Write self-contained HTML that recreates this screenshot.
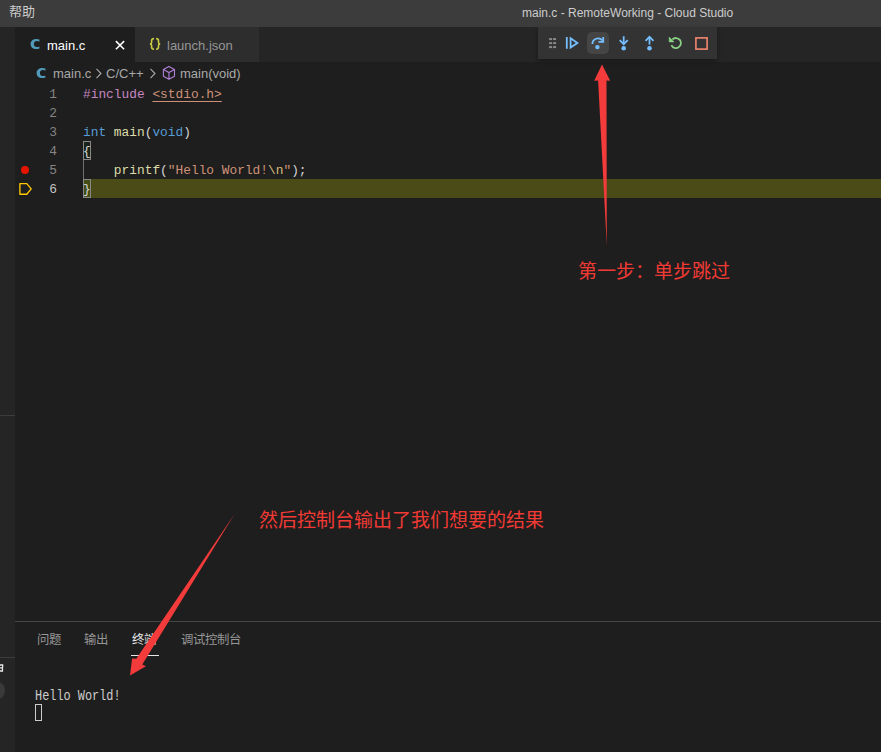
<!DOCTYPE html>
<html lang="zh-CN">
<head>
<meta charset="utf-8">
<style>
*{margin:0;padding:0;box-sizing:border-box}
html,body{width:881px;height:752px;overflow:hidden;background:#1e1e1e;font-family:"Liberation Sans",sans-serif;font-size:13px;color:#ccc;position:relative}
.abs{position:absolute}
#title{left:0;top:0;width:881px;height:27px;background:#3c3c3c}
#menu{left:9px;top:2px;font-size:13px;color:#cccccc;line-height:20px}
#wtitle{left:522px;top:3px;font-size:12px;color:#cccccc;white-space:nowrap;line-height:20px}
#side{left:0;top:27px;width:15px;height:725px;background:#252526}
#tabs{left:15px;top:27px;width:866px;height:35px;background:#252526}
.tab{top:0;height:35px;white-space:nowrap}
#tab1{left:0;width:120px;background:#1e1e1e}
#tab2{left:120px;width:124px;background:#2d2d2d}
#crumbs{left:15px;top:62px;width:866px;height:22px}
.code{font-family:"Liberation Mono",monospace;font-size:12.85px;white-space:pre}
.ln{margin-top:1px;left:15px;width:42px;text-align:right;color:#858585;height:19px;line-height:19px}
.cl{margin-top:1px;left:83px;height:19px;line-height:19px;color:#d4d4d4}
#hl{left:83px;top:179px;width:798px;height:19px;background:#4b4b18}
#panel{left:15px;top:621px;width:866px;height:131px;border-top:1px solid #454545;background:#1e1e1e}
.ptab{top:10px;font-size:12.4px;font-weight:500;color:#969696;white-space:nowrap;line-height:16px}
.red{color:#f23a35;font-size:19px;font-weight:500;white-space:nowrap;line-height:24px}
#dbg{left:538px;top:27px;width:179px;height:32px;background:#333333;box-shadow:0 2px 4px rgba(0,0,0,.35)}
</style>
</head>
<body>
<div id="title" class="abs"></div>
<div id="menu" class="abs">帮助</div>
<div id="wtitle" class="abs">main.c - RemoteWorking - Cloud Studio</div>
<div id="side" class="abs">
  <div class="abs" style="left:0;top:388px;width:15px;height:1px;background:#3c3c3c"></div>
  <div class="abs" style="left:0;top:630px;width:15px;height:1px;background:#3c3c3c"></div>
  <div class="abs" style="left:-11.5px;top:655px;width:16.6px;height:16.6px;border-radius:50%;background:#3a3a3a"></div>
  <svg class="abs" style="left:0;top:637px" width="5" height="9" viewBox="0 0 5 9"><path d="M0 0.2H3.3V1.8H0Z M2 1.8H3.3V3.2H2Z M0 3.2H3.1V4.6H0Z M1.8 4.6H3.1V6.2H1.8Z M0 6.2H3.1V7.7H0Z" fill="#e8e8e8"/></svg>
</div>
<div id="tabs" class="abs">
  <div id="tab1" class="abs tab">
    <svg class="abs" style="left:0;top:0" width="40" height="35" viewBox="0 0 40 35"><path d="M24.4 12.6C23.5 12.1 22.4 11.9 21.2 11.9C17.9 11.9 15.6 14.1 15.6 17.1C15.6 20.2 17.8 22.1 21 22.1C22.3 22.1 23.5 21.9 24.4 21.4V19.4C23.7 19.8 22.8 20 21.9 20C20 20 18.9 18.7 18.9 17C18.9 15.3 20.1 14 21.9 14C22.8 14 23.7 14.3 24.4 14.7Z" fill="#519aba"/></svg>
    <span class="abs" style="left:32px;top:11px;color:#ffffff">main.c</span>
    <svg class="abs" style="left:100px;top:13px" width="11" height="11" viewBox="0 0 11 11"><path d="M0.9 1.1L9.1 9.3M9.1 1.1L0.9 9.3" stroke="#fff" stroke-width="1.55"/></svg>
  </div>
  <div id="tab2" class="abs tab">
    <svg class="abs" style="left:0;top:0" width="30" height="35" viewBox="0 0 30 35"><path d="M19 11.6C17.1 11.6 16.6 12.3 16.6 13.8V15.6C16.6 16.5 16.1 16.9 14.9 16.9C16.1 16.9 16.6 17.3 16.6 18.2V20C16.6 21.5 17.1 22.2 19 22.2M21.1 11.6C23 11.6 23.5 12.3 23.5 13.8V15.6C23.5 16.5 24 16.9 25.2 16.9C24 16.9 23.5 17.3 23.5 18.2V20C23.5 21.5 23 22.2 21.1 22.2" stroke="#cbcb41" stroke-width="1.6" fill="none"/></svg>
    <span class="abs" style="left:32px;top:11px;color:#969696">launch.json</span>
  </div>
</div>
<div id="crumbs" class="abs">
  <svg class="abs" style="left:0;top:0" width="40" height="22" viewBox="0 0 40 22"><path transform="translate(6,-6)" d="M24.4 12.6C23.5 12.1 22.4 11.9 21.2 11.9C17.9 11.9 15.6 14.1 15.6 17.1C15.6 20.2 17.8 22.1 21 22.1C22.3 22.1 23.5 21.9 24.4 21.4V19.4C23.7 19.8 22.8 20 21.9 20C20 20 18.9 18.7 18.9 17C18.9 15.3 20.1 14 21.9 14C22.8 14 23.7 14.3 24.4 14.7Z" fill="#519aba"/></svg>
  <span class="abs" style="left:38px;top:4px;color:#a9a9a9">main.c</span>
  <svg class="abs" style="left:80px;top:6px" width="8" height="11" viewBox="0 0 8 11"><path d="M1.5 0.8L6 5.5L1.5 10.2" stroke="#a9a9a9" stroke-width="1.1" fill="none"/></svg>
  <span class="abs" style="left:91px;top:4px;color:#a9a9a9">C/C++</span>
  <svg class="abs" style="left:134px;top:6px" width="8" height="11" viewBox="0 0 8 11"><path d="M1.5 0.8L6 5.5L1.5 10.2" stroke="#a9a9a9" stroke-width="1.1" fill="none"/></svg>
  <svg class="abs" style="left:147px;top:3px" width="14" height="15" viewBox="0 0 14 15"><path d="M6.95 1.4L12.5 4.4V11.3L6.95 14.3L1.4 11.3V4.4Z M1.4 4.4L6.95 7.6L12.5 4.4 M6.95 7.6V14.3" stroke="#b180d7" stroke-width="1.1" fill="none" stroke-linejoin="round"/></svg>
  <span class="abs" style="left:165px;top:4px;color:#a9a9a9">main(void)</span>
</div>
<div id="hl" class="abs"></div>
<!-- gutter -->
<div class="abs" style="left:20.5px;top:166px;width:8.4px;height:8.4px;border-radius:50%;background:#e51400"></div>
<svg class="abs" style="left:18px;top:182px" width="15" height="15" viewBox="0 0 15 15"><path d="M1.9 1.6H8.8L13.2 6.9L8.8 12.2H1.9Z" stroke="#ffc800" stroke-width="1.35" fill="none" stroke-linejoin="round"/></svg>
<div class="abs code ln" style="top:84px">1</div>
<div class="abs code ln" style="top:103px">2</div>
<div class="abs code ln" style="top:122px">3</div>
<div class="abs code ln" style="top:141px">4</div>
<div class="abs code ln" style="top:160px">5</div>
<div class="abs code ln" style="top:179px;color:#c6c6c6">6</div>
<!-- bracket boxes / indent guide -->
<div class="abs" style="left:83px;top:141px;width:8px;height:19px;border:1px solid #888;background:rgba(0,100,0,0.1)"></div>
<div class="abs" style="left:83px;top:179px;width:8px;height:19px;border:1px solid #888;background:rgba(0,100,0,0.1)"></div>
<div class="abs" style="left:83px;top:160px;width:1px;height:19px;background:#707070"></div>
<div class="abs code cl" style="top:84px"><span style="color:#c586c0">#include</span> <span style="color:#ce9178;text-decoration:underline;text-underline-offset:3px">&lt;stdio.h&gt;</span></div>
<div class="abs code cl" style="top:122px"><span style="color:#569cd6">int</span> <span style="color:#dcdcaa">main</span>(<span style="color:#569cd6">void</span>)</div>
<div class="abs code cl" style="top:141px">{</div>
<div class="abs code cl" style="top:160px">    <span style="color:#dcdcaa">printf</span>(<span style="color:#ce9178">"Hello World!</span><span style="color:#d7ba7d">\n</span><span style="color:#ce9178">"</span>);</div>
<div class="abs code cl" style="top:179px">}</div>

<!-- debug toolbar -->
<div id="dbg" class="abs">
  <svg class="abs" style="left:0;top:0" width="179" height="32" viewBox="0 0 179 32">
    <g fill="#8a8a8a">
      <rect x="11.1" y="11.1" width="3" height="2"/><rect x="15.1" y="11.1" width="3" height="2"/>
      <rect x="11.1" y="15.1" width="3" height="2"/><rect x="15.1" y="15.1" width="3" height="2"/>
      <rect x="11.1" y="19.1" width="3" height="2"/><rect x="15.1" y="19.1" width="3" height="2"/>
    </g>
    <g stroke="#75beff" fill="none" stroke-width="1.8">
      <path d="M28.8 10V21.8"/>
      <path d="M32.6 11.2L39.4 15.9L32.6 20.6Z" stroke-linejoin="miter"/>
    </g>
    <rect x="49" y="5" width="22" height="22" rx="5" fill="#454545"/>
    <g stroke="#75beff" fill="none" stroke-width="1.8">
      <path d="M54.4 17A5.6 5.6 0 0 1 64.3 13.4"/>
      <path d="M65.2 10.1V14.8H60.5"/>
    </g>
    <circle cx="59.4" cy="20.1" r="2.2" fill="#75beff"/>
    <g stroke="#75beff" fill="none" stroke-width="1.8">
      <path d="M85.7 9.2V17"/><path d="M81.7 13.2L85.7 17.2L89.7 13.2"/>
      <path d="M111.5 17.6V10"/><path d="M107.5 13.8L111.5 9.8L115.5 13.8"/>
    </g>
    <circle cx="85.7" cy="21.2" r="2.3" fill="#75beff"/>
    <circle cx="111.5" cy="21.2" r="2.3" fill="#75beff"/>
    <g stroke="#89d185" fill="none" stroke-width="1.8">
      <path d="M133.4 18.1A5 5 0 1 0 134.4 12.5"/>
    </g>
    <path d="M131.2 10.1V14.9H136Z" fill="#89d185" stroke="#89d185" stroke-width="0.6" stroke-linejoin="round"/>
    <rect x="157.9" y="10.9" width="11.2" height="11.2" stroke="#f48771" stroke-width="1.6" fill="none"/>
  </svg>
</div>

<div id="panel" class="abs">
  <span class="abs ptab" style="left:21.5px">问题</span>
  <span class="abs ptab" style="left:69px">输出</span>
  <span class="abs ptab" style="left:117px;color:#e7e7e7">终端</span>
  <span class="abs ptab" style="left:166px">调试控制台</span>
  <div class="abs" style="left:116px;top:33px;width:28px;height:1px;background:#e7e7e7"></div>
  <div class="abs code" style="left:20px;top:66px;color:#cccccc;font-size:14.5px;line-height:17px;transform:scaleX(0.82);transform-origin:0 0">Hello World!</div>
  <div class="abs" style="left:20px;top:82px;width:7px;height:17px;border:1px solid #cccccc"></div>
</div>

<div class="abs red" style="left:578px;top:260px">第一步：单步跳过</div>
<div class="abs red" style="left:259px;top:509px">然后控制台输出了我们想要的结果</div>

<!-- arrows -->
<svg class="abs" style="left:0;top:0;pointer-events:none" width="881" height="752" viewBox="0 0 881 752">
  <path d="M602 64.5L610.2 80.8L606.5 80.6L606.8 245.5L598.1 80.6L594.2 80.8Z" fill="#f43b3b"/>
  <path d="M234.6 514L142.3 664.4L145.9 666.3L130 675.6L132.1 658.4L136.3 658.8Z" fill="#f43b3b"/>
</svg>
</body>
</html>
